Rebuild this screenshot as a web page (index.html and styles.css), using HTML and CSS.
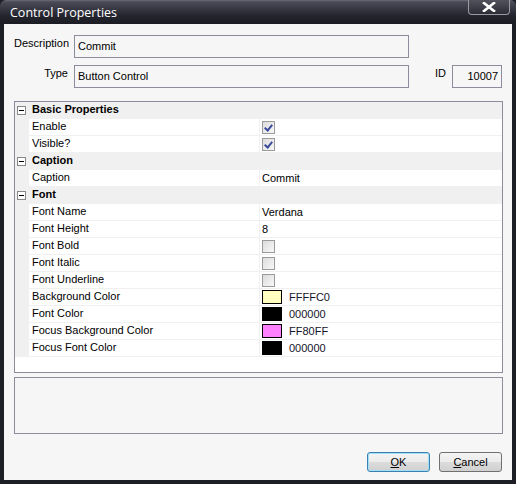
FILE: index.html
```html
<!DOCTYPE html>
<html lang="en">
<head>
  <meta charset="UTF-8">
  <title>Control Properties</title>
  <link rel="stylesheet" href="styles.css">
</head>
<body>
  <div class="window">
    <div class="titlebar">
      <span class="title">Control Properties</span>
      <button class="close" aria-label="Close">
        <svg width="14" height="10" viewBox="0 0 14 10"><path d="M2 1 L12 9 M12 1 L2 9" stroke="#fff" stroke-width="2.6" stroke-linecap="square"/></svg>
      </button>
    </div>

    <div class="client">
      <div class="field-row">
        <label class="lbl">Description</label>
        <div class="textbox wide">Commit</div>
      </div>
      <div class="field-row">
        <label class="lbl">Type</label>
        <div class="textbox wide">Button Control</div>
        <label class="id-lbl">ID</label>
        <div class="textbox id">10007</div>
      </div>

      <div class="grid">
        <div class="row group"><span class="toggle"></span><span class="name">Basic Properties</span></div>
        <div class="row"><span class="gutter"></span><span class="name">Enable</span><span class="val"><span class="check on"></span></span></div>
        <div class="row"><span class="gutter"></span><span class="name">Visible?</span><span class="val"><span class="check on"></span></span></div>

        <div class="row group"><span class="toggle"></span><span class="name">Caption</span></div>
        <div class="row"><span class="gutter"></span><span class="name">Caption</span><span class="val">Commit</span></div>

        <div class="row group"><span class="toggle"></span><span class="name">Font</span></div>
        <div class="row"><span class="gutter"></span><span class="name">Font Name</span><span class="val">Verdana</span></div>
        <div class="row"><span class="gutter"></span><span class="name">Font Height</span><span class="val">8</span></div>
        <div class="row"><span class="gutter"></span><span class="name">Font Bold</span><span class="val"><span class="check"></span></span></div>
        <div class="row"><span class="gutter"></span><span class="name">Font Italic</span><span class="val"><span class="check"></span></span></div>
        <div class="row"><span class="gutter"></span><span class="name">Font Underline</span><span class="val"><span class="check"></span></span></div>
        <div class="row"><span class="gutter"></span><span class="name">Background Color</span><span class="val"><span class="swatch" style="background:#FFFFC0"></span><span class="hex">FFFFC0</span></span></div>
        <div class="row"><span class="gutter"></span><span class="name">Font Color</span><span class="val"><span class="swatch" style="background:#000000"></span><span class="hex">000000</span></span></div>
        <div class="row"><span class="gutter"></span><span class="name">Focus Background Color</span><span class="val"><span class="swatch" style="background:#FF80FF"></span><span class="hex">FF80FF</span></span></div>
        <div class="row"><span class="gutter"></span><span class="name">Focus Font Color</span><span class="val"><span class="swatch" style="background:#000000"></span><span class="hex">000000</span></span></div>
      </div>

      <div class="desc-panel"></div>

      <div class="buttons">
        <button class="btn default"><u>O</u>K</button>
        <button class="btn"><u>C</u>ancel</button>
      </div>
    </div>
  </div>
</body>
</html>
```

FILE: styles.css
```css
html, body {
  margin: 0;
  padding: 0;
  background: #1e1e26;
}
.window {
  width: 516px;
  height: 484px;
  box-sizing: border-box;
  padding: 0 4px 4px 4px;
  background: #1e1e26;
  border-radius: 6px 6px 0 0;
  display: flex;
  flex-direction: column;
  font-family: "Liberation Sans", Arial, sans-serif;
  font-size: 11px;
  color: #000;
}
.titlebar {
  height: 24px;
  margin: 0 -4px;
  padding: 0 6px 0 10px;
  display: flex;
  align-items: flex-start;
  justify-content: space-between;
  background: linear-gradient(#6c6c78 0, #4a4a56 2px, #3a3a46 8px, #24242e 16px, #1c1c24 24px);
  border-radius: 6px 6px 0 0;
}
.title {
  font-family: "Open Sans", sans-serif;
  font-size: 12.5px;
  color: #fff;
  line-height: 26px;
}
.close {
  width: 42px;
  height: 15px;
  margin-top: 0;
  padding: 0;
  border: 1px solid #9a9aa4;
  border-top: none;
  border-radius: 0 0 4px 4px;
  background: linear-gradient(#52525c, #2c2c36);
  display: flex;
  align-items: center;
  justify-content: center;
}
.client {
  flex: 1;
  background: #f6f6f6;
  padding: 11px 9px 0 10px;
  display: flex;
  flex-direction: column;
}
.field-row {
  display: flex;
  align-items: flex-start;
  margin-bottom: 7px;
}
.lbl {
  width: 54px;
  text-align: right;
  margin-right: 6px;
  padding-top: 2px;
}
.textbox {
  height: 23px;
  box-sizing: border-box;
  border: 1px solid #8c8c9c;
  padding: 0 3px;
  line-height: 20px;
  background: #f6f6f6;
}
.textbox.wide {
  width: 335px;
}
.id-lbl {
  margin-left: 26px;
  width: 17px;
  padding-top: 2px;
}
.textbox.id {
  width: 50px;
  text-align: right;
}
.grid {
  margin-top: 6px;
  height: 272px;
  box-sizing: border-box;
  border: 1px solid #8c8c9c;
  background: #fff;
}
.row {
  display: grid;
  grid-template-columns: 14px 230px 1fr;
  height: 17px;
  box-sizing: border-box;
  border-bottom: 1px solid #f0f0f0;
  line-height: 15px;
}
.gutter {
  background: #f0f0f0;
}
.name {
  padding-left: 3px;
  white-space: nowrap;
}
.val {
  border-left: 1px solid #f0f0f0;
  padding-left: 2px;
  display: flex;
  align-items: center;
}
.row.group {
  background: #f0f0f0;
  border-bottom-color: #f0f0f0;
}
.row.group .name {
  font-weight: bold;
}
.toggle {
  width: 9px;
  height: 9px;
  box-sizing: border-box;
  margin: 4px 0 0 2px;
  border: 1px solid #888;
  background: #fff;
  position: relative;
}
.toggle::after {
  content: "";
  position: absolute;
  left: 1px;
  top: 3px;
  width: 5px;
  height: 1px;
  background: #000;
}
.check {
  width: 13px;
  height: 13px;
  box-sizing: border-box;
  border: 1px solid #9a9a9a;
  background: linear-gradient(135deg, #dcdcdc, #f8f8f8);
  position: relative;
}
.check.on::after {
  content: "";
  position: absolute;
  left: 3px;
  top: 1px;
  width: 3px;
  height: 6px;
  border: solid #3a4a9a;
  border-width: 0 2px 2px 0;
  transform: rotate(40deg);
}
.swatch {
  width: 20px;
  height: 14px;
  box-sizing: border-box;
  border: 1px solid #000;
  margin-right: 7px;
}
.hex {
  color: #14142a;
}
.desc-panel {
  margin-top: 4px;
  height: 57px;
  box-sizing: border-box;
  border: 1px solid #8c8c9c;
}
.buttons {
  margin-top: 18px;
  display: flex;
  justify-content: flex-end;
  gap: 9px;
  padding-right: 1px;
}
.btn {
  width: 63px;
  height: 20px;
  box-sizing: border-box;
  border: 1px solid #707070;
  border-radius: 3px;
  background: linear-gradient(#f4f4f4, #ebebeb 50%, #dcdcdc 51%, #d0d0d0);
  font-family: "Liberation Sans", Arial, sans-serif;
  font-size: 11px;
  padding: 0;
}
.btn.default {
  border-color: #3c7fb1;
  box-shadow: inset 0 0 0 1px #9ee0f8;
}
```
